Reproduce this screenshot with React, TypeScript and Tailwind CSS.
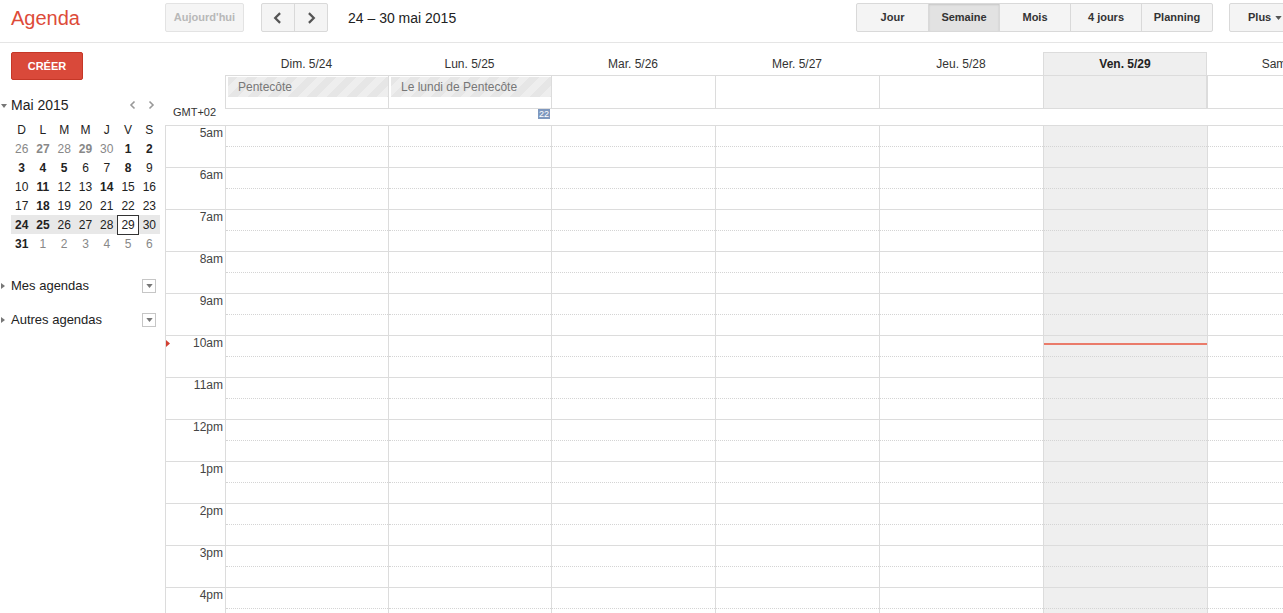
import React from "react";

const FONT = { fontFamily: '"Liberation Sans", Arial, sans-serif' };

const days = [
  { label: "Dim. 5/24", event: "Pentecôte", w: "w-[163px]" },
  { label: "Lun. 5/25", event: "Le lundi de Pentecôte", w: "w-[163px]" },
  { label: "Mar. 5/26", w: "w-[164px]" },
  { label: "Mer. 5/27", w: "w-[164px]" },
  { label: "Jeu. 5/28", w: "w-[164px]" },
  { label: "Ven. 5/29", today: true, w: "w-[164px]" },
  { label: "Sam. 5/30", w: "w-[164px]" },
];

const hours = ["5am", "6am", "7am", "8am", "9am", "10am", "11am", "12pm", "1pm", "2pm", "3pm", "4pm", "5pm", "6pm"];

type Cell = { d: string; bold?: boolean; gray?: boolean; box?: boolean };
const weeks: Cell[][] = [
  [
    { d: "26", gray: true },
    { d: "27", gray: true, bold: true },
    { d: "28", gray: true },
    { d: "29", gray: true, bold: true },
    { d: "30", gray: true },
    { d: "1", bold: true },
    { d: "2", bold: true },
  ],
  [
    { d: "3", bold: true },
    { d: "4", bold: true },
    { d: "5", bold: true },
    { d: "6" },
    { d: "7" },
    { d: "8", bold: true },
    { d: "9" },
  ],
  [
    { d: "10" },
    { d: "11", bold: true },
    { d: "12" },
    { d: "13" },
    { d: "14", bold: true },
    { d: "15" },
    { d: "16" },
  ],
  [
    { d: "17" },
    { d: "18", bold: true },
    { d: "19" },
    { d: "20" },
    { d: "21" },
    { d: "22" },
    { d: "23" },
  ],
  [
    { d: "24", bold: true },
    { d: "25", bold: true },
    { d: "26" },
    { d: "27" },
    { d: "28" },
    { d: "29", box: true },
    { d: "30" },
  ],
  [
    { d: "31", bold: true },
    { d: "1", gray: true },
    { d: "2", gray: true },
    { d: "3", gray: true },
    { d: "4", gray: true },
    { d: "5", gray: true },
    { d: "6", gray: true },
  ],
];

function Chevron({ dir, className }: { dir: "l" | "r"; className?: string }) {
  return (
    <svg viewBox="0 0 10 10" className={className}>
      {dir === "l" ? (
        <path d="M6.5 1.5 L3 5 L6.5 8.5" fill="none" stroke="currentColor" strokeWidth="1.6" />
      ) : (
        <path d="M3.5 1.5 L7 5 L3.5 8.5" fill="none" stroke="currentColor" strokeWidth="1.6" />
      )}
    </svg>
  );
}

function DropBox() {
  return (
    <div className="w-[14px] h-[14px] border border-[#c6c6c6] flex items-center justify-center bg-white">
      <svg viewBox="0 0 8 5" className="w-[7px] h-[4px]">
        <path d="M0 0 L8 0 L4 5 Z" fill="#777" />
      </svg>
    </div>
  );
}

export default function App() {
  const viewBtns = ["Jour", "Semaine", "Mois", "4 jours", "Planning"];
  return (
    <div className="h-[613px] w-[1283px] overflow-hidden bg-white text-[#222]" style={FONT}>
      {/* Top bar */}
      <div className="h-[43px] border-b border-[#e5e5e5] flex items-start">
        <div className="w-[165px] shrink-0 pl-[11px] pt-[6px] text-[20px] leading-[24px] text-[#dd4b39]">Agenda</div>
        <div className="mt-[3px] h-[29px] w-[79px] border border-[#e3e3e3] rounded-[2px] bg-[#f5f5f5] text-[11px] font-bold text-[#b8b8b8] flex items-center justify-center">
          Aujourd'hui
        </div>
        <div className="mt-[3px] ml-[17px] h-[29px] flex border border-[#d9d9d9] rounded-[2px] bg-[#f4f4f4]">
          <div className="w-[33px] flex items-center justify-center text-[#555] border-r border-[#d9d9d9]">
            <Chevron dir="l" className="w-[14px] h-[14px]" />
          </div>
          <div className="w-[32px] flex items-center justify-center text-[#555]">
            <Chevron dir="r" className="w-[14px] h-[14px]" />
          </div>
        </div>
        <div className="ml-[20px] mt-[9px] text-[14px] leading-[18px] text-[#222]">24 – 30 mai 2015</div>
        <div className="flex-1" />
        <div className="mt-[3px] h-[29px] flex border border-[#d9d9d9] rounded-[2px] bg-[#f4f4f4]">
          {viewBtns.map((b, i) => (
            <div
              key={b}
              className={`w-[71px] flex items-center justify-center text-[11px] font-bold text-[#333] ${
                i > 0 ? "border-l border-[#d9d9d9]" : ""
              } ${b === "Semaine" ? "bg-[#e2e2e2] shadow-[inset_0_1px_2px_rgba(0,0,0,0.12)]" : ""}`}
            >
              {b}
            </div>
          ))}
        </div>
        <div className="mt-[3px] ml-[16px] h-[29px] w-[70px] shrink-0 border border-[#d9d9d9] rounded-[2px] bg-[#f4f4f4] flex items-center pl-[18px] gap-[4px] text-[11px] font-bold text-[#333] -mr-[16px]">
          Plus
          <svg viewBox="0 0 8 5" className="w-[7px] h-[4px]">
            <path d="M0 0 L8 0 L4 5 Z" fill="#555" />
          </svg>
        </div>
      </div>

      <div className="flex">
        {/* Sidebar */}
        <div className="w-[165px] shrink-0">
          <div className="mt-[9px] ml-[11px] w-[72px] h-[28px] rounded-[2px] bg-[#d9493a] border border-[#c53727] flex items-center justify-center text-[11px] font-bold text-white">
            CRÉER
          </div>
          <div className="mt-[15px] flex items-center h-[20px] relative">
            <svg viewBox="0 0 6 4" className="absolute left-[1px] top-[9px] w-[6px] h-[4px]">
              <path d="M0 0 L6 0 L3 4 Z" fill="#777" />
            </svg>
            <span className="ml-[11px] text-[14px] text-[#222]">Mai 2015</span>
            <Chevron dir="l" className="absolute left-[128px] top-[5px] w-[10px] h-[10px] text-[#999]" />
            <Chevron dir="r" className="absolute left-[146px] top-[5px] w-[10px] h-[10px] text-[#999]" />
          </div>
          <div className="ml-[11px] w-[149px] mt-[5px] text-[12px]">
            <div className="grid grid-cols-7 h-[19px]">
              {["D", "L", "M", "M", "J", "V", "S"].map((d, i) => (
                <div key={i} className="flex items-center justify-center text-[#222]">
                  {d}
                </div>
              ))}
            </div>
            {weeks.map((w, wi) => (
              <div key={wi} className={`grid grid-cols-7 h-[19px] ${wi === 4 ? "bg-[#e8e8e8]" : ""}`}>
                {w.map((c, ci) => (
                  <div
                    key={ci}
                    className={`flex items-center justify-center ${c.bold ? "font-bold" : ""} ${
                      c.gray ? "text-[#888]" : "text-[#222]"
                    } ${c.box ? "border border-[#333] bg-white" : ""}`}
                  >
                    {c.d}
                  </div>
                ))}
              </div>
            ))}
          </div>
          <div className="mt-[23px] relative h-[20px] flex items-center">
            <svg viewBox="0 0 4 6" className="absolute left-[1px] top-[7px] w-[4px] h-[6px]">
              <path d="M0 0 L4 3 L0 6 Z" fill="#777" />
            </svg>
            <span className="ml-[11px] text-[13px] text-[#222]">Mes agendas</span>
            <div className="absolute left-[142px] top-[3px]">
              <DropBox />
            </div>
          </div>
          <div className="mt-[14px] relative h-[20px] flex items-center">
            <svg viewBox="0 0 4 6" className="absolute left-[1px] top-[7px] w-[4px] h-[6px]">
              <path d="M0 0 L4 3 L0 6 Z" fill="#777" />
            </svg>
            <span className="ml-[11px] text-[13px] text-[#222]">Autres agendas</span>
            <div className="absolute left-[142px] top-[3px]">
              <DropBox />
            </div>
          </div>
        </div>

        {/* Main */}
        <div className="flex-1 min-w-0 overflow-hidden">
          {/* Header */}
          <div className="pt-[9px] flex">
            <div className="w-[60px] shrink-0" />
            {days.map((d, i) => (
              <div key={i} className={`${d.w} shrink-0 flex flex-col`}>
                <div
                  className={`h-[23px] flex items-center justify-center text-[12px] whitespace-nowrap ${
                    d.today ? "bg-[#efefef] border-t border-l border-r border-[#dcdcdc] font-bold text-[#222]" : "text-[#333]"
                  }`}
                >
                  {d.label}
                </div>
                <div
                  className={`h-[34px] border-t border-b border-l border-[#dcdcdc] ${
                    d.today ? "bg-[#efefef] border-r" : ""
                  } relative`}
                >
                  {d.event && (
                    <div className="mt-[1px] ml-[2px] h-[20px] flex items-center pl-[10px] text-[12px] text-[#777] whitespace-nowrap bg-[repeating-linear-gradient(135deg,#e6e6e6_0px,#e6e6e6_7px,#eeeeee_7px,#eeeeee_14px)]">
                      {d.event}
                    </div>
                  )}
                  {i === 1 && (
                    <div className="absolute right-[1px] top-[33px] h-[10px] px-[1px] bg-[#7f98be] text-white text-[9px] leading-[10px]">
                      22
                    </div>
                  )}
                </div>
              </div>
            ))}
          </div>
          <div className="h-[16px] pl-[8px] text-[11px] leading-[6px] text-[#333]">GMT+02</div>

          {/* Time grid */}
          <div className="border-t border-l border-[#dcdcdc]">
            {hours.map((h, hi) => (
              <div key={h} className="flex h-[42px] border-b border-[#dcdcdc]">
                <div className="w-[59px] shrink-0 relative text-right pr-[2px] text-[12px] leading-[14px] text-[#444]">
                  {h === "10am" && (
                    <svg viewBox="0 0 4 7" className="absolute left-0 top-[4px] w-[4px] h-[7px]">
                      <path d="M0 0 L4 3.5 L0 7 Z" fill="#d23f31" />
                    </svg>
                  )}
                  {h}
                </div>
                {days.map((d, i) => (
                  <div
                    key={i}
                    className={`${d.w} shrink-0 border-l border-[#dcdcdc] relative ${d.today ? "bg-[#efefef]" : ""}`}
                  >
                    <div className="h-[21px] border-b border-dotted border-[#d4d4d4]" />
                    {d.today && hi === 5 && (
                      <div className="absolute left-0 right-0 top-[7px] h-[2px] bg-[#ea7b6a]" />
                    )}
                  </div>
                ))}
              </div>
            ))}
          </div>
        </div>
      </div>
    </div>
  );
}
